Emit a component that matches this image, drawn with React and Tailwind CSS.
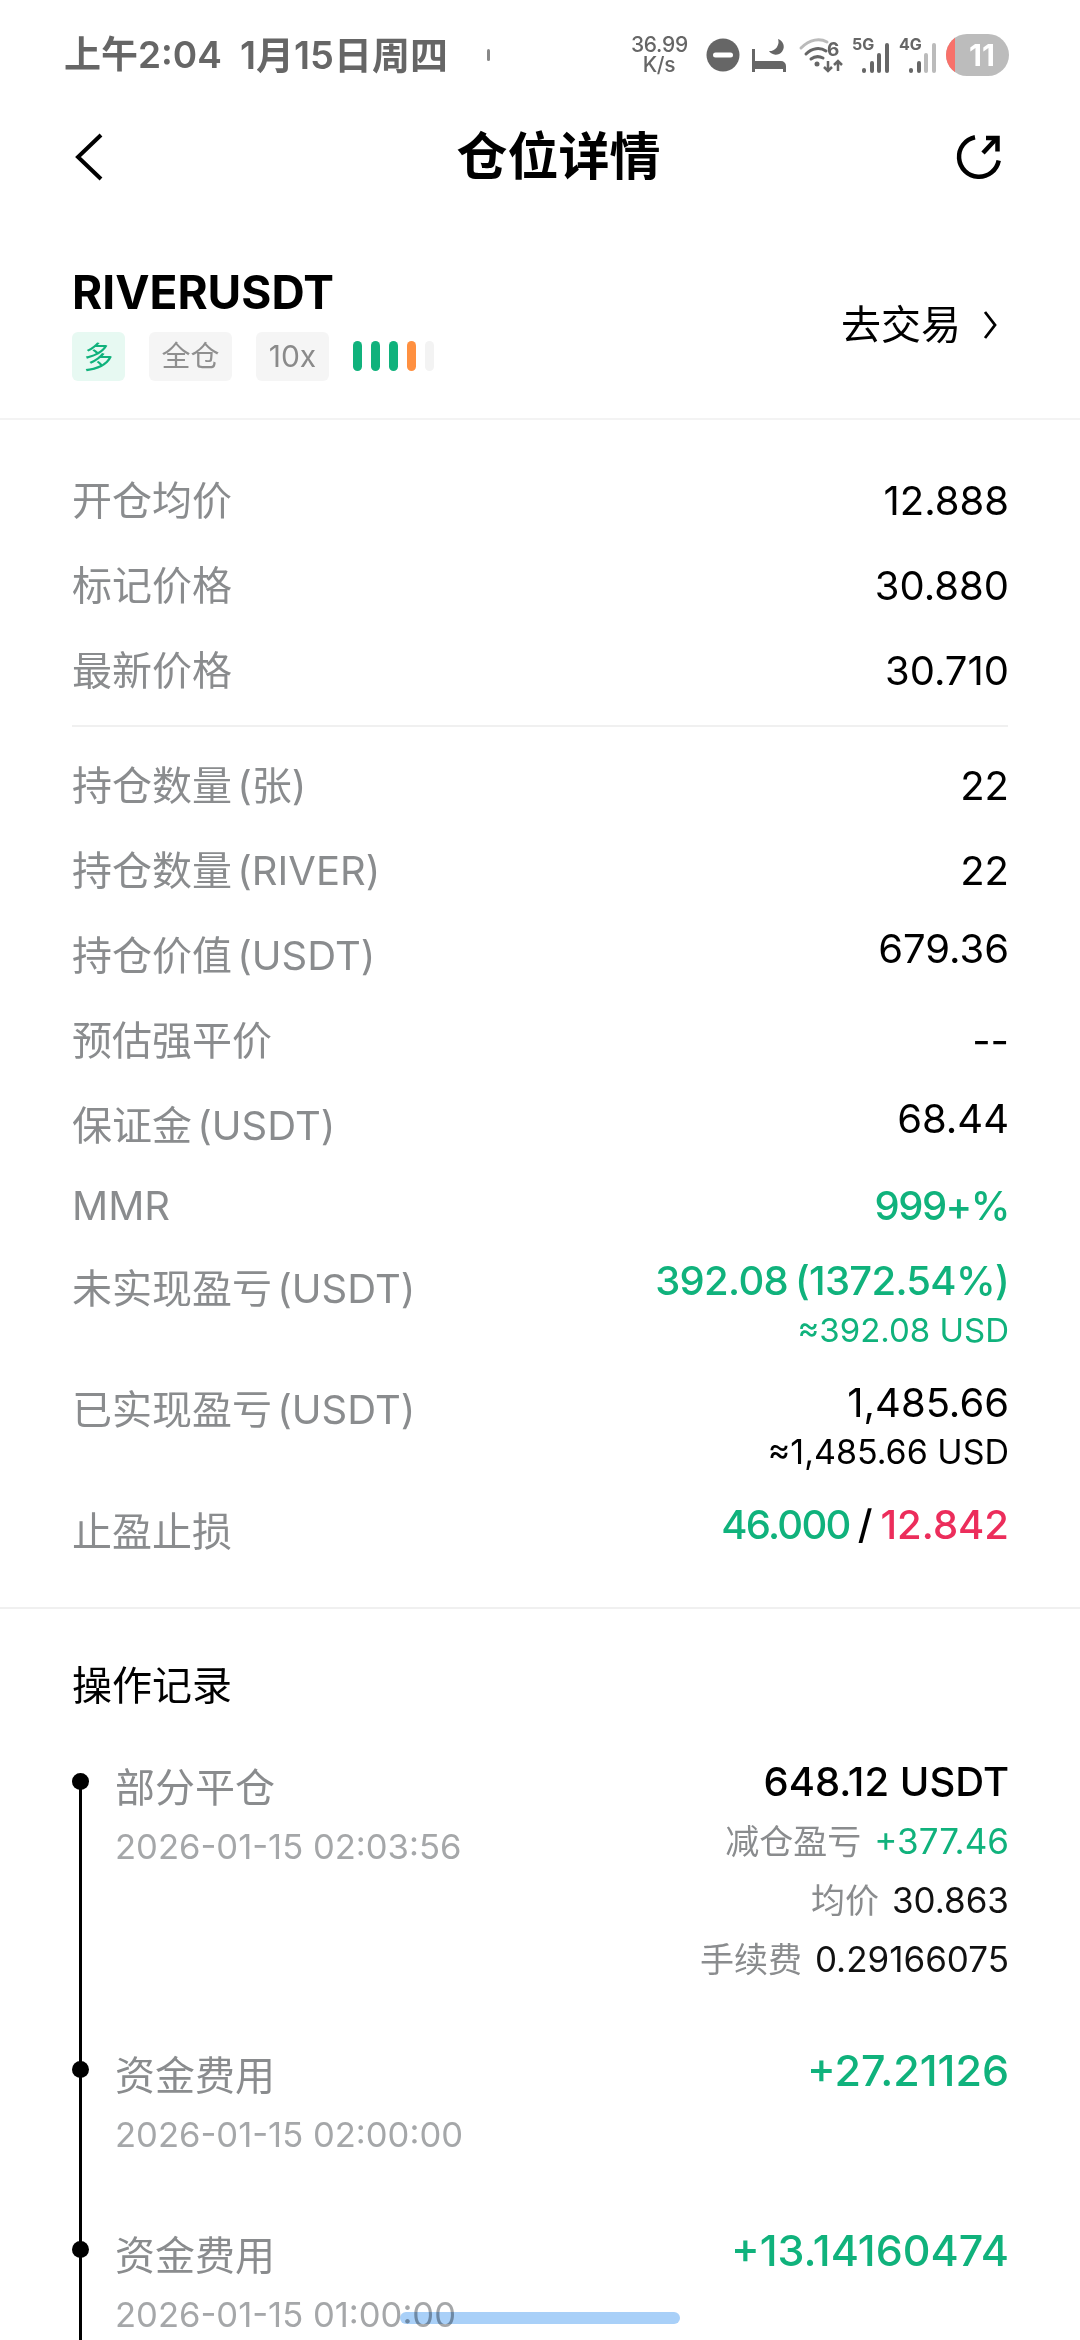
const green = "text-[#10b27c]";

function Row({ label, children, h = "h-[85px]", shift = "" }) {
  return (
    <div className={`flex justify-between items-center ${h}`}>
      <span className="text-[40px] leading-[50px] text-[#8a8c8e] [word-spacing:-6px]">{label}</span>
      <div className={`text-right ${shift}`}>{children}</div>
    </div>
  );
}

const Val = ({ children, c = "text-black" }) => (
  <div className={`text-[40px] leading-[50px] ${c}`}>{children}</div>
);

function StatusIcons() {
  return (
    <div className="flex items-center">
      <div className="w-[56px] text-center text-[21px] leading-[20px] tracking-[-0.3px] font-medium text-[#666] mr-[19px]">
        36.99
        <br />
        K/s
      </div>
      <svg width="34" height="34" viewBox="0 0 34 34" className="mr-[11px]">
        <circle cx="17" cy="17" r="16.5" fill="#666" />
        <rect x="7" y="14.5" width="20" height="5" rx="2.5" fill="#fff" />
      </svg>
      <svg width="36" height="36" viewBox="0 0 36 36" className="mr-[11px]" fill="#666">
        <rect x="1" y="12" width="3" height="23" />
        <path d="M4 24h26a5 5 0 0 1 5 5v6h-3v-3H4z" />
        <path d="M27 2a8 8 0 1 1-9 12 9 9 0 0 0 9-12z" />
      </svg>
      <svg width="46" height="36" viewBox="-2 0 46 36" className="mr-[8px]" fill="none">
        <path d="M1 11C10 2 20 1 27 5" stroke="#bbb" strokeWidth="3" strokeLinecap="round" />
        <path d="M6 17c6-6 14-7 20-3" stroke="#666" strokeWidth="3" strokeLinecap="round" />
        <path d="M11 22c4-3 8-3 12-1" stroke="#666" strokeWidth="3" strokeLinecap="round" />
        <circle cx="17" cy="27" r="2.5" fill="#666" />
        <path d="M28 24v10M24 30l4 4 4-4M38 34V24M34 28l4-4 4 4" stroke="#666" strokeWidth="2.5" />
        <text x="27" y="19" fontSize="19" fontWeight="700" fill="#666" fontFamily="Inter">6</text>
      </svg>
      <svg width="38" height="40" viewBox="0 0 38 40" className="mr-[9px]" fill="#666">
        <text x="0" y="15" fontSize="16" fontWeight="700" fontFamily="Inter">5G</text>
        <rect x="10" y="33" width="4" height="5" rx="2" />
        <rect x="18" y="26" width="4" height="12" rx="2" />
        <rect x="25" y="18" width="4" height="20" rx="2" />
        <rect x="33" y="8" width="4" height="30" rx="2" />
      </svg>
      <svg width="38" height="40" viewBox="0 0 38 40" className="mr-[9px]" fill="#666">
        <text x="0" y="15" fontSize="16" fontWeight="700" fontFamily="Inter">4G</text>
        <rect x="10" y="33" width="4" height="5" rx="2" />
        <rect x="18" y="26" width="4" height="12" rx="2" />
        <rect x="25" y="18" width="4" height="20" rx="2" fill="#bbb" />
        <rect x="33" y="8" width="4" height="30" rx="2" fill="#bbb" />
      </svg>
      <div className="w-[63px] h-[42px] rounded-full bg-[#bcbcbc] overflow-hidden flex relative">
        <div className="w-[9px] h-full bg-[#f8716a]" />
        <div className="flex-1 text-center text-white font-bold text-[30px] leading-[42px]">11</div>
      </div>
    </div>
  );
}

function Timeline({ title, time, right, h }) {
  return (
    <div className={`flex justify-between ${h} relative`}>
      <div className="absolute left-0 top-[-4px] w-[17px] h-[17px] rounded-full bg-black" />
      <div className="pl-[43px]">
        <div className="text-[40px] leading-[50px] text-[#8a8c8e] mt-[-14px] mb-[10px]">{title}</div>
        <div className="text-[34.6px] leading-[46px] text-[#a5a7a9]">{time}</div>
      </div>
      <div className="text-right">{right}</div>
    </div>
  );
}

const Sub = ({ label, value, c = "text-[#111]" }) => (
  <div className="flex justify-end items-center gap-[13px] h-[59px]">
    <span className="text-[34px] text-[#8a8c8e]">{label}</span>
    <span className={`text-[35px] ${c}`}>{value}</span>
  </div>
);

export default function App() {
  return (
    <div className="relative w-[1080px] h-[2340px] overflow-hidden bg-white font-['Inter','Noto_Sans_CJK_SC',sans-serif]">
      {/* status bar */}
      <div className="flex items-center justify-between h-[110px] pl-[64px] pr-[71px]">
        <div className="flex items-center gap-[18px] font-semibold text-[#666]">
          <span className="text-[37px]">上午2:04</span>
          <span className="text-[38px]">1月15日周四</span>
          <span className="w-[3px] h-[12px] rounded-full bg-[#888] ml-[21px]" />
        </div>
        <StatusIcons />
      </div>

      {/* nav */}
      <div className="flex items-center justify-between h-[94px] pl-[75px] pr-[76px]">
        <svg width="28" height="48" viewBox="0 0 28 48" fill="none">
          <path d="M26 2L3 24l23 22" stroke="#000" strokeWidth="4" />
        </svg>
        <span className="ml-[60px] text-[51px] font-bold text-black">仓位详情</span>
        <svg width="50" height="50" viewBox="0 0 50 50" fill="none" stroke="#000" strokeWidth="4.5">
          <path d="M21 5.2A20 20 0 1 0 44.7 28.5" />
          <path d="M29 21L43 6" />
          <path d="M32 6h11.5v13.5" />
        </svg>
      </div>

      {/* header */}
      <div className="flex justify-between items-center h-[216px] pl-[72px] pr-[83px] border-b-2 border-[#f3f3f3]">
        <div className="mt-[24px]">
          <div className="text-[46px] leading-[52px] font-bold text-black">RIVERUSDT</div>
          <div className="flex items-center mt-[14px]">
            <span className="w-[53px] h-[49px] pt-[2px] rounded-[6px] bg-[#e7f9f2] text-[#10b27c] text-[30px] flex items-center justify-center mr-[24px]">多</span>
            <span className="w-[83px] h-[49px] pt-[2px] rounded-[6px] bg-[#f5f5f5] text-[#8f8f8f] text-[29px] flex items-center justify-center mr-[24px]">全仓</span>
            <span className="w-[73px] h-[49px] rounded-[6px] bg-[#f5f5f5] text-[#8a8a8a] text-[30px] flex items-center justify-center mr-[24px]">10x</span>
            <div className="flex gap-[9px]">
              <span className="w-[9px] h-[30px] rounded-full bg-[#10b27c]" />
              <span className="w-[9px] h-[30px] rounded-full bg-[#10b27c]" />
              <span className="w-[9px] h-[30px] rounded-full bg-[#10b27c]" />
              <span className="w-[9px] h-[30px] rounded-full bg-[#ff9040]" />
              <span className="w-[9px] h-[30px] rounded-full bg-[#f3f3f3]" />
            </div>
          </div>
        </div>
        <div className="flex items-center gap-[22px] mt-[27px] text-[40px] text-black">
          <span>去交易</span>
          <svg width="14" height="30" viewBox="0 0 14 30" fill="none">
            <path d="M2 2l10 13L2 28" stroke="#000" strokeWidth="2.8" />
          </svg>
        </div>
      </div>

      {/* first group */}
      <div className="ml-[72px] mr-[71px] pt-[38px]">
        <Row label="开仓均价"><Val>12.888</Val></Row>
        <Row label="标记价格"><Val>30.880</Val></Row>
        <Row label="最新价格"><Val>30.710</Val></Row>
      </div>
      <div className="mx-[72px] mt-[12px] h-[2px] bg-[#f0f0f0]" />

      {/* second group */}
      <div className="ml-[72px] mr-[71px] pt-[16px]">
        <Row label="持仓数量 (张)"><Val>22</Val></Row>
        <Row label="持仓数量 (RIVER)"><Val>22</Val></Row>
        <Row label="持仓价值 (USDT)" shift="mb-[14px]"><Val>679.36</Val></Row>
        <Row label="预估强平价"><Val>--</Val></Row>
        <Row label="保证金 (USDT)" shift="mb-[14px]"><Val>68.44</Val></Row>
        <Row label="MMR" h="h-[75px]"><Val c={`${green} font-medium tracking-[-1.5px]`}>999+%</Val></Row>
        <div className="flex justify-between h-[122px]">
          <span className="text-[40px] leading-[50px] text-[#8a8c8e] mt-[21px] [word-spacing:-6px]">未实现盈亏 (USDT)</span>
          <div className="text-right">
            <div className={`text-[40px] leading-[50px] font-medium tracking-[-0.7px] [word-spacing:-3px] ${green} mt-[13px]`}>392.08 (1372.54%)</div>
            <div className={`text-[33px] leading-[48px] ${green}`}>≈392.08 USD</div>
          </div>
        </div>
        <div className="flex justify-between h-[122px]">
          <span className="text-[40px] leading-[50px] text-[#8a8c8e] mt-[20px] [word-spacing:-6px]">已实现盈亏 (USDT)</span>
          <div className="text-right">
            <div className="text-[40px] leading-[50px] text-black mt-[13px]">1,485.66</div>
            <div className="text-[34px] leading-[48px] text-black">≈1,485.66 USD</div>
          </div>
        </div>
        <div className="flex justify-between h-[77px]">
          <span className="text-[40px] leading-[50px] text-[#8a8c8e] mt-[20px]">止盈止损</span>
          <div className="flex items-center h-[50px] text-[40px] font-medium mt-[13px]">
            <span className={`tracking-[-1.7px] ${green}`}>46.000</span>
            <span className="text-black mx-[8px]">/</span>
            <span className="text-[#ec2d5b]">12.842</span>
          </div>
        </div>
      </div>
      <div className="mt-[43px] h-[2px] bg-[#f0f0f0]" />

      {/* records */}
      <div className="ml-[72px] mr-[71px]">
        <div className="text-[40px] leading-[50px] text-black mt-[52px] mb-[66px]">操作记录</div>
        <div className="relative">
          <div className="absolute left-[7px] top-[0px] bottom-[-200px] w-[3px] bg-black" />
          <Timeline
            title="部分平仓"
            time="2026-01-15 02:03:56"
            h="h-[288px]"
            right={
              <div className="mt-[-20px]">
                <div className="text-[40px] leading-[50px] font-medium text-black mb-[5px]">648.12 USDT</div>
                <Sub label="减仓盈亏" value="+377.46" c={green} />
                <Sub label="均价" value="30.863" />
                <Sub label="手续费" value="0.29166075" />
              </div>
            }
          />
          <Timeline
            title="资金费用"
            time="2026-01-15 02:00:00"
            h="h-[180px]"
            right={<div className={`text-[43px] leading-[50px] font-medium ${green} mt-[-20px]`}>+27.21126</div>}
          />
          <Timeline
            title="资金费用"
            time="2026-01-15 01:00:00"
            h="h-[120px]"
            right={<div className={`text-[43px] leading-[50px] font-medium ${green} mt-[-20px]`}>+13.14160474</div>}
          />
        </div>
      </div>

      {/* scroll pill */}
      <div className="absolute left-[400px] top-[2312px] w-[280px] h-[12px] rounded-full bg-[#a9d0f8] mix-blend-multiply" />
    </div>
  );
}
